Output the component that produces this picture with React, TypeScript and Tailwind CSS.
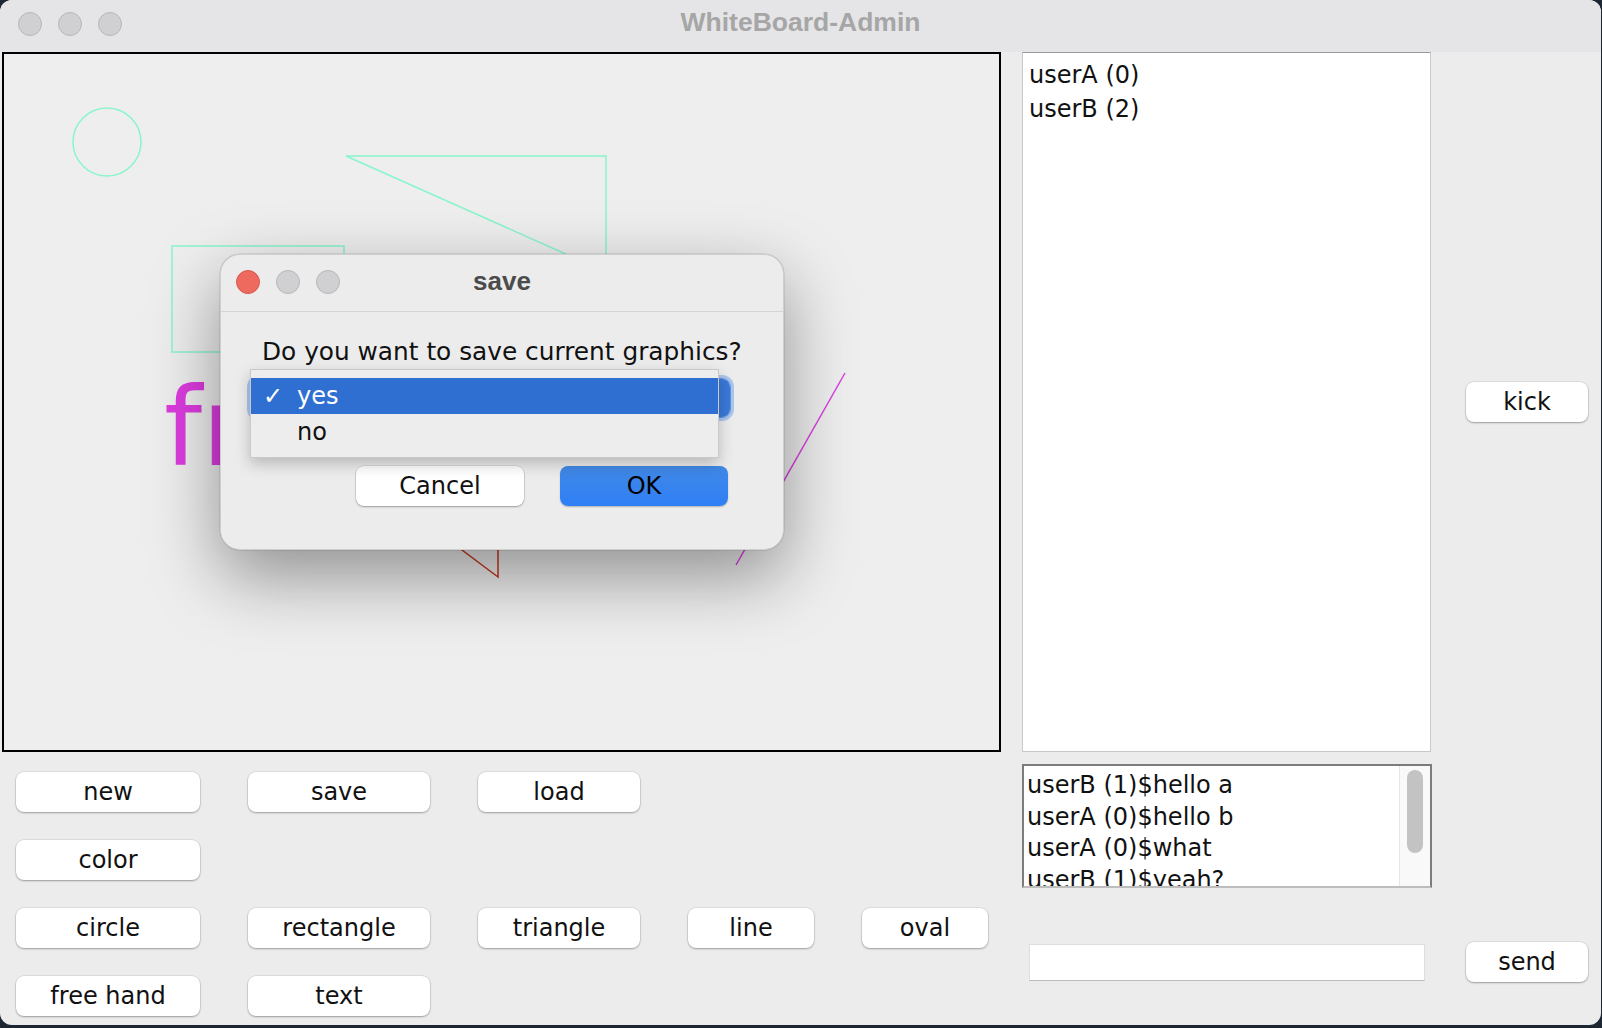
import React from 'react';

const sans = "font-['DejaVu_Sans','Liberation_Sans',sans-serif]";
const sysBold = "font-['Liberation_Sans','DejaVu_Sans',sans-serif] font-bold";

const users = ['userA (0)', 'userB (2)'];
const messages = ['userB (1)$hello a', 'userA (0)$hello b', 'userA (0)$what', 'userB (1)$yeah?'];

// rows of tool buttons, col widths are fixed like the swing layout
const colW = ['w-[184px]', 'w-[182px]', 'w-[162px]', 'w-[126px]', 'w-[126px]'];
const toolRows = [
  ['new', 'save', 'load'],
  ['color'],
  ['circle', 'rectangle', 'triangle', 'line', 'oval'],
  ['free hand', 'text'],
];

const MacButton: React.FC<{ label: string; className?: string }> = ({ label, className = '' }) => (
  <button
    className={`h-[40px] rounded-[8px] bg-white text-[24px] text-[#111] shadow-[0_1px_2px_rgba(0,0,0,0.3),0_0_0_0.5px_rgba(0,0,0,0.12)] flex items-center justify-center ${className}`}
  >
    {label}
  </button>
);

const Lights: React.FC<{ active?: boolean }> = ({ active }) => (
  <div className="flex gap-[16px]">
    <span
      className={`w-[24px] h-[24px] rounded-full border ${
        active ? 'bg-[#ee695e] border-[#d65a4f]' : 'bg-[#d0d0d2] border-[#b7b7b9]'
      }`}
    />
    <span className="w-[24px] h-[24px] rounded-full border bg-[#d0d0d2] border-[#b7b7b9]" />
    <span className="w-[24px] h-[24px] rounded-full border bg-[#d0d0d2] border-[#b7b7b9]" />
  </div>
);

const Drawing = () => (
  <svg className="absolute inset-0" width="995" height="696">
    <g transform="translate(-4 -54)" fill="none" strokeWidth="1.5">
      <circle cx="107" cy="142" r="34" stroke="#88f5cb" />
      <polygon points="346,156 606,156 606,272" stroke="#88f5cb" />
      <rect x="172" y="246" width="172" height="106" stroke="#88f5cb" />
      {/* only the start of the text shows past the dialog */}
      <text x="164" y="465" fill="#dc3cdf" stroke="none" fontSize="108" fontFamily="DejaVu Sans, sans-serif">
        fr
      </text>
      <polygon points="498,577 378,487 498,400" stroke="#c8361c" />
      <line x1="845" y1="373" x2="736" y2="565" stroke="#d93fe2" />
    </g>
  </svg>
);

export default function App() {
  return (
    <div className={`w-[1602px] h-[1028px] bg-[#1d2633] overflow-hidden ${sans}`}>
      <div className="relative w-[1601px] h-[1025px] rounded-[12px] bg-[#ececec] overflow-hidden flex flex-col">
        {/* window title bar */}
        <div className="h-[52px] shrink-0 bg-[#e5e5e7] grid grid-cols-[1fr_auto_1fr] items-start">
          <div className="pl-[18px] pt-[12px]">
            <Lights />
          </div>
          <div className={`${sysBold} text-[26.5px] text-[#a6a6a6] leading-[45px]`}>WhiteBoard-Admin</div>
          <div />
        </div>

        <div className="flex">
          {/* canvas + tools */}
          <div className="pl-[2px] flex flex-col">
            <div className="relative w-[999px] h-[700px] border-2 border-black bg-[#eeeeee] overflow-hidden">
              <Drawing />
            </div>
            <div className="mt-[20px] ml-[14px] flex flex-col gap-[28px]">
              {toolRows.map((row, r) => (
                <div key={r} className="flex gap-[48px]">
                  {row.map((b, i) => (
                    <MacButton key={b} label={b} className={colW[i]} />
                  ))}
                </div>
              ))}
            </div>
          </div>

          {/* users, chat */}
          <div className="ml-[21px] flex flex-col">
            <div className="flex items-center">
              <div className="w-[409px] h-[700px] bg-white border border-[#c8c8c8] border-t-[#9a9a9a] pt-[5px] pl-[6px]">
                {users.map((u) => (
                  <div key={u} className="text-[24px] leading-[34px] text-[#111]">
                    {u}
                  </div>
                ))}
              </div>
              <MacButton label="kick" className="ml-[35px] w-[122px]" />
            </div>

            <div className="mt-[12px] w-[410px] h-[124px] bg-white border-2 border-[#7c7c7c] border-b-[#bdbdbd] flex overflow-hidden">
              <div className="flex-1 pl-[3px] pt-[4px] overflow-hidden">
                {messages.map((m, i) => (
                  <div key={i} className="text-[24px] leading-[31.5px] text-[#111] whitespace-nowrap">
                    {m}
                  </div>
                ))}
              </div>
              <div className="w-[31px] bg-[#f9f9f9] border-l border-[#e6e6e6] pt-[4px] flex justify-center">
                <div className="w-[16px] h-[83px] rounded-full bg-[#c3c3c3]" />
              </div>
            </div>

            <div className="mt-[54px] flex items-center">
              <div className="ml-[7px] w-[396px] h-[37px] bg-white border border-[#dedede] border-b-[#bcbcbc]" />
              <MacButton label="send" className="ml-[41px] w-[122px]" />
            </div>
          </div>
        </div>

        {/* save dialog */}
        <div className="absolute left-[220px] top-[254px] w-[564px] h-[296px] rounded-[20px] bg-[#ececec] border border-[#cfcfcf] shadow-[0_26px_70px_rgba(0,0,0,0.4),0_0_0_0.5px_rgba(0,0,0,0.15)]">
          <div className="h-[57px] pb-[3px] border-b border-[#d5d5d5] grid grid-cols-[1fr_auto_1fr] items-center">
            <div className="pl-[15px]">
              <Lights active />
            </div>
            <div className={`${sysBold} text-[26px] text-[#4b4b4b]`}>save</div>
            <div />
          </div>

          <div className="pl-[41px] mt-[25px] text-[24.8px] leading-[30px] text-[#111] whitespace-nowrap">
            Do you want to save current graphics?
          </div>

          <div className="ml-[29px] mt-[11px] w-[481px] h-[40px] rounded-[9px] bg-white border border-[#5a94e6] shadow-[0_0_0_3px_rgba(120,165,235,0.55)] flex justify-end">
            <div className="w-[26px] h-full rounded-r-[8px] bg-[#3a79d8]" />
          </div>

          <div className="mt-[48px] flex">
            <MacButton label="Cancel" className="ml-[135px] w-[168px]" />
            <button className="ml-[36px] w-[168px] h-[40px] rounded-[8px] bg-[linear-gradient(#4189e6,#2f7ff6)] text-[24px] text-black shadow-[0_1px_1.5px_rgba(0,0,0,0.25)]">
              OK
            </button>
          </div>

          {/* open combo popup */}
          <div className="absolute left-[29px] top-[114px] w-[469px] h-[89px] bg-[#ededed] border border-[#c9c9c9] shadow-[0_6px_14px_rgba(0,0,0,0.22)] pt-[8px]">
            <div className="h-[36px] bg-[#2f6fd2] text-white text-[24px] flex items-center">
              <span className="w-[46px] pl-[12px] font-bold">✓</span>
              <span>yes</span>
            </div>
            <div className="h-[36px] text-[#111] text-[24px] flex items-center pl-[46px]">no</div>
          </div>
        </div>
      </div>
    </div>
  );
}
